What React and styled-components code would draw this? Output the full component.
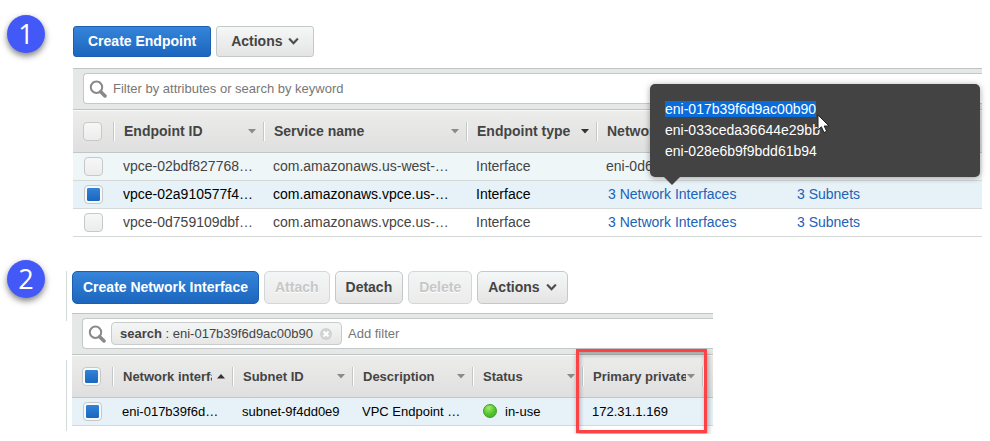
import React from "react";
import styled, { createGlobalStyle, css } from "styled-components";

const GlobalStyle = createGlobalStyle`
  * { box-sizing: border-box; }
  body {
    margin: 0;
    background: #fff;
    color: #444;
    font-family: "Liberation Sans", Arial, sans-serif;
    font-size: 14px;
  }
`;

const Page = styled.main`
  display: flex;
  flex-direction: column;
  gap: 34px;
  padding: 26px 8px 8px 7px;
`;

const Step = styled.section`
  display: flex;
  align-items: flex-start;
`;

const Badge = styled.div`
  flex: none;
  width: 38px;
  height: 38px;
  margin-top: -11px;
  border-radius: 50%;
  background: #4259f7;
  box-shadow: 0 3px 6px rgba(0, 0, 0, 0.5);
  color: #fff;
  font: 27px/38px "Open Sans", sans-serif;
  text-align: center;
`;

const Console = styled.div`
  flex: 1;
  min-width: 0;
  max-width: ${(p) => (p.$compact ? "641px" : "none")};
  margin-left: ${(p) => (p.$compact ? "5px" : "28px")};
`;

const Rail = styled.div`
  flex: none;
  align-self: stretch;
  display: flex;
  flex-direction: column;
  gap: 39px;
  width: 1px;
  margin-left: 21px;
  margin-bottom: -5px;
  &::before, &::after { content: ""; background: #d3dadb; }
  &::before { height: 50px; }
  &::after { flex: 1; }
`;

const Toolbar = styled.div`
  display: flex;
  gap: 5px;
  margin-bottom: ${(p) => (p.$tall ? "9px" : "11px")};
`;

const Button = styled.button`
  display: flex;
  align-items: center;
  gap: 6px;
  height: ${(p) => (p.$tall ? "33px" : "31px")};
  padding: 0 ${(p) => (p.$tall ? "10px" : "14px")} 1px;
  border: 1px solid #c3c8c8;
  border-radius: ${(p) => (p.$tall ? "5px" : "3px")};
  background: linear-gradient(#f5f8f8, #e4e4e3);
  color: #444;
  font: bold 14px "Liberation Sans", Arial, sans-serif;
  white-space: nowrap;
  &:disabled {
    border-color: #d3d7d7;
    background: linear-gradient(#f3f6f6, #ebebea);
    color: #c6c8c8;
    text-shadow: 0 1px 0 #fff;
  }
  ${(p) => p.$primary && css`
    border-color: #1b5fae;
    background: linear-gradient(#3585da, #1c66be);
    color: #fff;
  `}
`;

const FilterBar = styled.div`
  padding: 4px 0 5px 10px;
  border-top: 1px solid #bfc5c5;
  border-bottom: 1px solid #bfc5c5;
  background: #e6e7e7;
`;

const SearchBox = styled.div`
  display: flex;
  align-items: center;
  gap: 5px;
  height: 31px;
  padding-left: 5px;
  border: 1px solid #c3c9c9;
  border-right: 0;
  border-radius: 4px 0 0 4px;
  background: #fff;
`;

const SearchInput = styled.input`
  flex: 1;
  min-width: 0;
  padding: 0 0 0 1px;
  border: 0;
  outline: 0;
  background: none;
  color: #444;
  font: 13px "Liberation Sans", Arial, sans-serif;
  &::placeholder { color: #777; opacity: 1; }
`;

const Token = styled.span`
  display: flex;
  align-items: center;
  height: 23px;
  padding: 0 9px 0 8px;
  border: 1px solid #c9cccc;
  border-radius: 4px;
  background: linear-gradient(#f4f6f6, #e6e6e5);
  font-size: 13px;
  white-space: pre;
`;

const ClearButton = styled.button`
  display: flex;
  margin-left: 7px;
  padding: 0;
  border: 0;
  background: none;
`;

const Table = styled.table`
  width: 100%;
  table-layout: fixed;
  border-collapse: separate;
  border-spacing: 0;
  font-size: ${(p) => (p.$compact ? "13px" : "14px")};
`;

const Col = styled.col`
  width: ${(p) => (p.$width ? `${p.$width}px` : "auto")};
`;

const HeadCell = styled.th`
  position: relative;
  height: 43px;
  padding: 0;
  border-top: 1px solid #fafafa;
  border-bottom: 1px solid #c2c6c6;
  background: linear-gradient(#ececeb, #dedfde);
  text-align: left;
`;

const HeadLabel = styled.div`
  display: flex;
  align-items: center;
  gap: ${(p) => (p.$sorted ? "5px" : "1px")};
  height: 19px;
  padding: 0 7px 0 10px;
  border-left: 1px solid #c4c7c7;
  box-shadow: inset 1px 0 0 #fff;
  > span {
    flex: 1;
    padding-bottom: 1px;
    overflow: hidden;
    white-space: nowrap;
  }
  > svg { flex: none; }
`;

const CheckSlot = styled.div`
  display: flex;
  padding-left: ${(p) => (p.$head ? "10px" : "11px")};
`;

const Check = styled.input`
  appearance: none;
  width: 19px;
  height: 19px;
  margin: 0;
  border: 1px solid #c7c8ca;
  border-radius: 4px;
  background: linear-gradient(#f6f7f7, #ececeb);
  &:checked {
    background: linear-gradient(#3383d8, #1b66be) content-box, #f7f8f8;
    padding: 2px;
    box-shadow: inset 0 0 0 2px #f7f8f8;
  }
`;

const Row = styled.tr`
  background: ${(p) => (p.$selected ? "#e6f2f7" : p.$hover ? "#eff6f7" : "#fff")};
  color: ${(p) => (p.$selected ? "#000" : "#444")};
`;

const Cell = styled.td`
  height: 28px;
  padding: 0 10px 1px;
  border-bottom: 1px solid #d5d9d8;
  white-space: nowrap;
`;

const CheckCell = styled(Cell)`
  padding: 0;
`;

const Clip = styled.div`
  overflow: hidden;
  text-overflow: ellipsis;
`;

const Anchor = styled.span`
  position: relative;
  display: inline-block;
  margin-left: 2px;
`;

const Link = styled.a`
  color: #2062b8;
  text-decoration: none;
`;

const Tooltip = styled.div`
  position: absolute;
  z-index: 2;
  left: 42px;
  bottom: calc(100% + 9px);
  width: 330px;
  padding: 15px;
  border-radius: 5px;
  background: #434343;
  box-shadow: 0 1px 6px rgba(0, 0, 0, 0.35);
  color: #fff;
  line-height: 21px;
  &::after {
    content: "";
    position: absolute;
    left: 14px;
    top: 100%;
    border: 8px solid transparent;
    border-top-color: #434343;
    border-bottom: 0;
  }
`;

const TipList = styled.ul`
  margin: 0;
  padding: 0;
  list-style: none;
`;

const Selected = styled.mark`
  background: #0a6cdb;
  color: #fff;
`;

const Pointer = styled.svg`
  position: absolute;
  left: 167px;
  top: 30px;
`;

const Status = styled.span`
  display: flex;
  align-items: center;
  gap: 8px;
`;

const Dot = styled.i`
  width: 14px;
  height: 14px;
  margin-left: 1px;
  border: 1px solid #3f9c23;
  border-radius: 50%;
  background: radial-gradient(circle at 40% 25%, #a2ec6b, #50c42d 55%, #3eaa23);
`;

const Highlight = styled.div`
  position: absolute;
  z-index: 1;
  top: -7px;
  left: -6px;
  width: calc(100% + 11px);
  height: 84px;
  border: 3px solid #fb4347;
  box-shadow: 1px 3px 5px rgba(0, 0, 0, 0.35), inset 1px 3px 4px rgba(0, 0, 0, 0.3);
  pointer-events: none;
`;

const Chevron = () => (
  <svg width="11" height="9" viewBox="0 0 11 9" aria-hidden="true">
    <path d="M1.2 1.5 5.5 6 9.8 1.5" fill="none" stroke="#4a4a4a" strokeWidth="2.4" />
    <path d="M2 1 5.5 4.6 9 1" fill="none" stroke="#a5a5a5" strokeWidth="0.9" />
  </svg>
);

const Magnifier = () => (
  <svg width="18" height="18" viewBox="0 0 18 18" aria-hidden="true">
    <circle cx="7.5" cy="7.2" r="5.7" fill="none" stroke="#898989" strokeWidth="2" />
    <path d="M11.7 11.7 16 16" stroke="#898989" strokeWidth="3.5" strokeLinecap="round" />
  </svg>
);

const Arrow = ({ sort }) => (
  <svg width="8" height="5" viewBox="0 0 8 5" aria-hidden="true">
    <path d={sort === "asc" ? "M0 4.5 4 0 8 4.5Z" : "M0 0H8L4 4.5Z"} fill={sort ? "#333" : "#8b8b8b"} />
  </svg>
);

const ClearIcon = () => (
  <svg width="12" height="12" viewBox="0 0 12 12" aria-hidden="true">
    <circle cx="6" cy="6" r="6" fill="#d2d2d2" />
    <path d="m3.5 3.5 5 5m0-5-5 5" stroke="#fff" strokeWidth="2" />
  </svg>
);

const Cursor = () => (
  <Pointer width="13" height="20" viewBox="0 0 13 20" aria-hidden="true">
    <path d="M1 1v15l3.4-3.2 2.6 5.7 2.7-1.2L7.2 12H12Z" fill="#fff" stroke="#222" strokeWidth="1" />
  </Pointer>
);

function Head({ columns, checked, label }) {
  return (
    <>
      <colgroup>
        <Col $width={40} />
        {columns.map((c) => <Col key={c.name} $width={c.width} />)}
      </colgroup>
      <thead>
        <tr>
          <HeadCell>
            <CheckSlot $head><Check type="checkbox" aria-label={label} defaultChecked={checked} /></CheckSlot>
          </HeadCell>
          {columns.map((c) => (
            <HeadCell key={c.name}>
              <HeadLabel $sorted={Boolean(c.sort)}>
                <span>{c.name}</span>
                {c.name && <Arrow sort={c.sort} />}
              </HeadLabel>
              {c.highlight && <Highlight />}
            </HeadCell>
          ))}
        </tr>
      </thead>
    </>
  );
}

const endpointColumns = [
  { name: "Endpoint ID", width: 150 },
  { name: "Service name", width: 203 },
  { name: "Endpoint type", width: 130, sort: "desc" },
  { name: "Network Interfaces", width: 191 },
  { name: "Subnets" },
];

const endpoints = [
  { id: "vpce-02bdf827768…", service: "com.amazonaws.us-west-…", eni: "eni-0d6…", hover: true },
  { id: "vpce-02a910577f4…", service: "com.amazonaws.vpce.us-…", selected: true },
  { id: "vpce-0d759109dbf…", service: "com.amazonaws.vpce.us-…" },
];

const interfaceColumns = [
  { name: "Network interface ID", width: 120, sort: "asc" },
  { name: "Subnet ID", width: 120 },
  { name: "Description", width: 120 },
  { name: "Status", width: 110 },
  { name: "Primary private IPv4", width: 120, highlight: true },
  { name: "" },
];

export default function App() {
  return (
    <>
      <GlobalStyle />
      <Page>
        <Step>
          <Badge>1</Badge>
          <Console>
            <Toolbar>
              <Button $primary>Create Endpoint</Button>
              <Button>Actions <Chevron /></Button>
            </Toolbar>
            <FilterBar>
              <SearchBox>
                <Magnifier />
                <SearchInput aria-label="Filter endpoints" placeholder="Filter by attributes or search by keyword" />
              </SearchBox>
            </FilterBar>
            <Table>
              <Head columns={endpointColumns} label="Select all endpoints" />
              <tbody>
                {endpoints.map((e) => (
                  <Row key={e.id} $selected={e.selected} $hover={e.hover}>
                    <CheckCell>
                      <CheckSlot>
                        <Check type="checkbox" aria-label={e.id} defaultChecked={e.selected} />
                      </CheckSlot>
                    </CheckCell>
                    <Cell><Clip>{e.id}</Clip></Cell>
                    <Cell><Clip>{e.service}</Clip></Cell>
                    <Cell>Interface</Cell>
                    <Cell>
                      {e.eni || (
                        <Anchor>
                          <Link href="#interfaces">3 Network Interfaces</Link>
                          {e.selected && (
                            <Tooltip role="tooltip">
                              <TipList>
                                <li><Selected>eni-017b39f6d9ac00b90</Selected></li>
                                <li>eni-033ceda36644e29bb</li>
                                <li>eni-028e6b9f9bdd61b94</li>
                              </TipList>
                              <Cursor />
                            </Tooltip>
                          )}
                        </Anchor>
                      )}
                    </Cell>
                    <Cell>{!e.eni && <Link href="#subnets">3 Subnets</Link>}</Cell>
                  </Row>
                ))}
              </tbody>
            </Table>
          </Console>
        </Step>

        <Step>
          <Badge>2</Badge>
          <Rail />
          <Console $compact>
            <Toolbar $tall>
              <Button $tall $primary>Create Network Interface</Button>
              <Button $tall disabled>Attach</Button>
              <Button $tall>Detach</Button>
              <Button $tall disabled>Delete</Button>
              <Button $tall>Actions <Chevron /></Button>
            </Toolbar>
            <FilterBar>
              <SearchBox>
                <Magnifier />
                <Token>
                  <b>search</b> : eni-017b39f6d9ac00b90
                  <ClearButton aria-label="Remove filter"><ClearIcon /></ClearButton>
                </Token>
                <SearchInput aria-label="Add filter" placeholder="Add filter" />
              </SearchBox>
            </FilterBar>
            <Table $compact>
              <Head columns={interfaceColumns} checked label="Select all interfaces" />
              <tbody>
                <Row $selected>
                  <CheckCell>
                    <CheckSlot>
                      <Check type="checkbox" aria-label="eni-017b39f6d" defaultChecked />
                    </CheckSlot>
                  </CheckCell>
                  <Cell><Clip>eni-017b39f6d…</Clip></Cell>
                  <Cell><Clip>subnet-9f4dd0e9</Clip></Cell>
                  <Cell><Clip>VPC Endpoint …</Clip></Cell>
                  <Cell><Status><Dot />in-use</Status></Cell>
                  <Cell>172.31.1.169</Cell>
                  <Cell />
                </Row>
              </tbody>
            </Table>
          </Console>
        </Step>
      </Page>
    </>
  );
}
